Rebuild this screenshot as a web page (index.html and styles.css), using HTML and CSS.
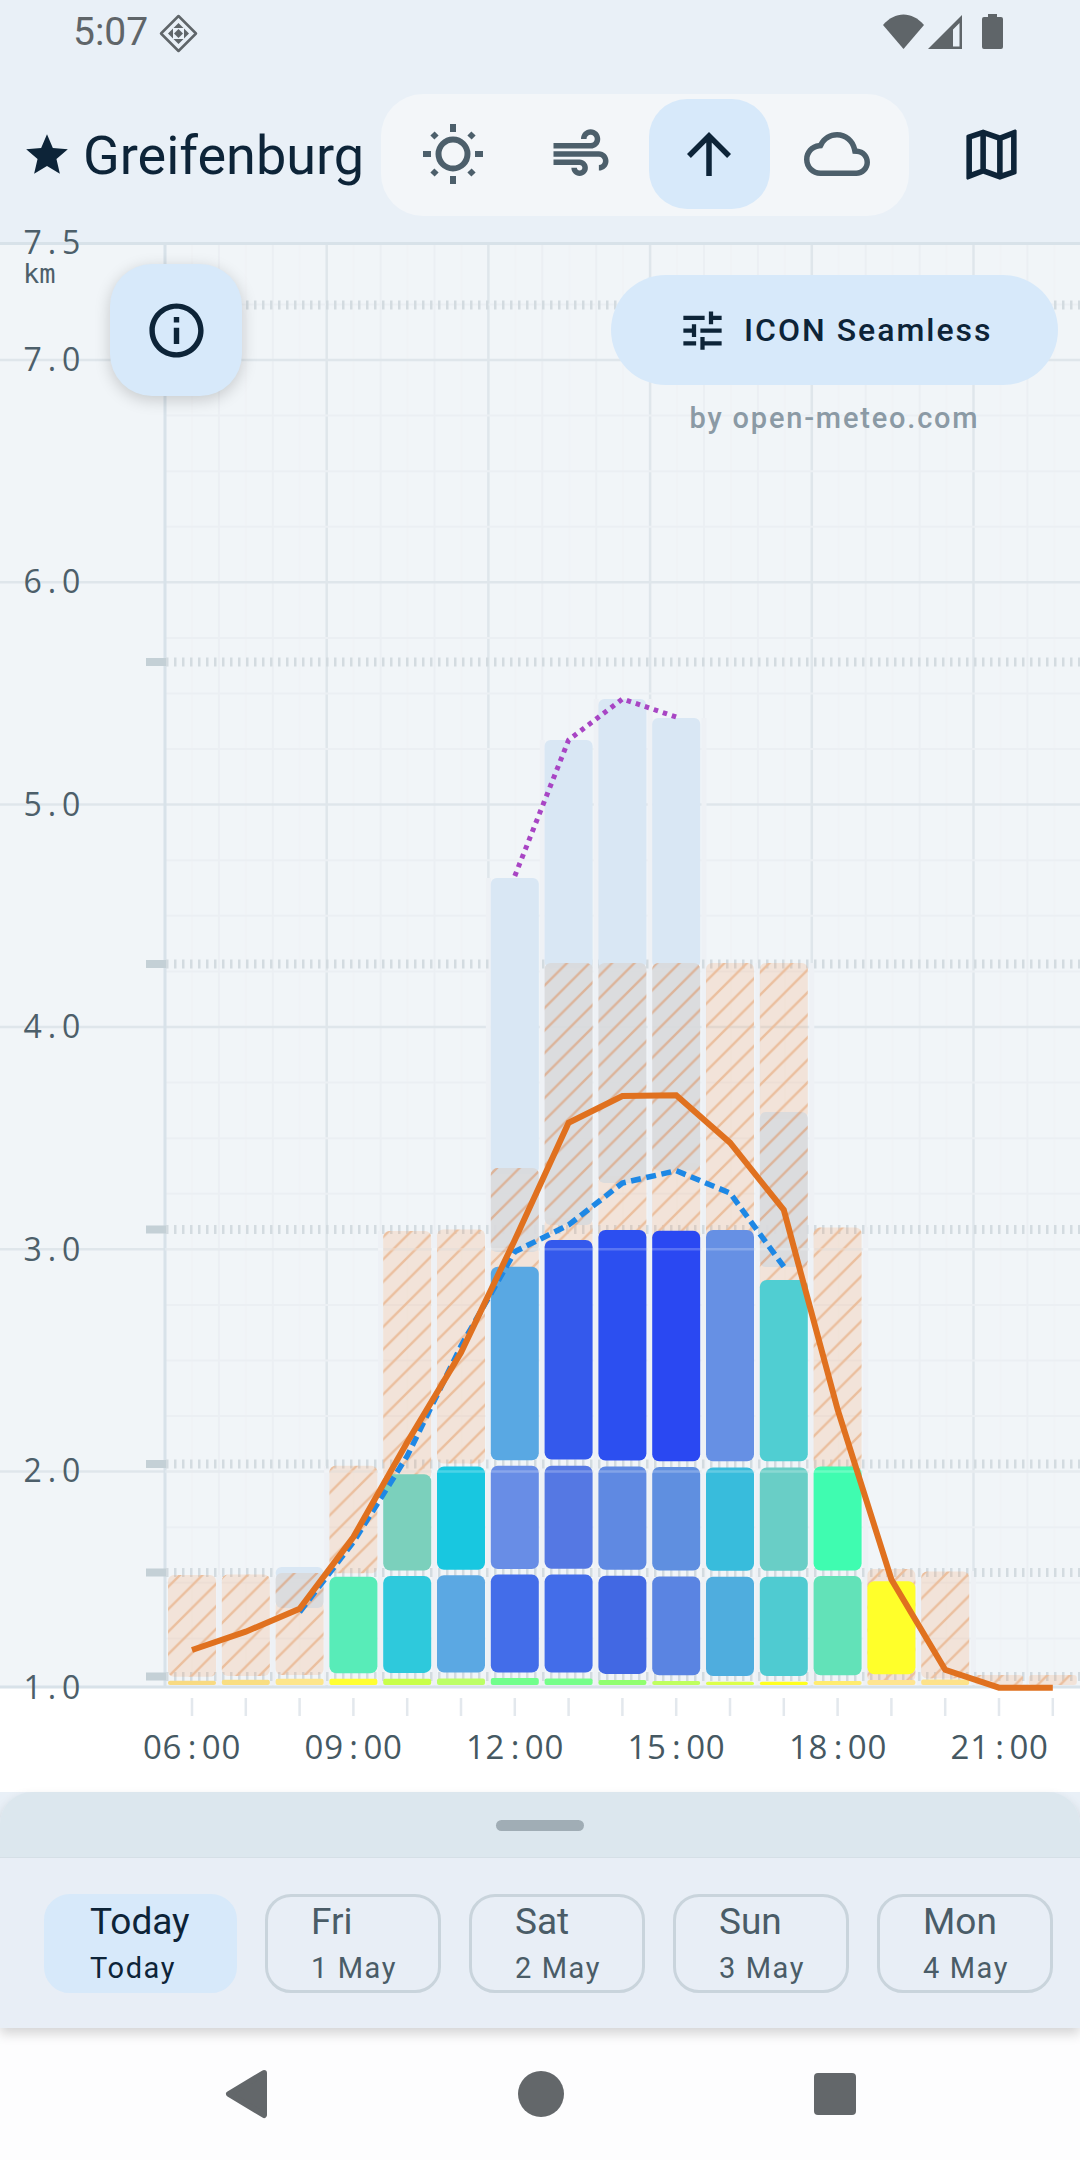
FILE: index.html
```html
<!DOCTYPE html>
<html>
	<head>
		<meta charset="utf-8">
		<title>Greifenburg</title>
		<link rel="stylesheet" href="styles.css">
	</head>
	<body>
		<div id="statusbar">
			<span class="clock">5:07</span>
			<svg class="notif" width="39" height="39" viewBox="0 0 39 39">
				<path class="notif-line" d="M19.5 2L37 19.5 19.5 37 2 19.5z"/>
				<path d="M19.5 9l5 5h-10zM19.5 30l-5-5h10zM9 19.5l5-5v10zM30 19.5l-5 5v-10z"/>
				<path d="M19.5 15l4.5 4.500-4.500 4.500-4.500-4.500z"/>
			</svg>
			<span class="grow"></span>
			<svg width="41" height="35" viewBox="0 0 41 35"><path d="M0 11C12-3 29-3 41 11L20.500 35z"/></svg>
			<svg class="signal" width="34" height="35" viewBox="0 0 34 35">
				<path d="M0 35L34 1v34zM25 32.500h6.500V9L25 15.500z" fill-rule="evenodd"/>
			</svg>
			<svg class="battery" width="21" height="35" viewBox="0 0 21 35"><path d="M6 0h9v3h4q2 0 2 2v28q0 2-2 2H2q-2 0-2-2V5q0-2 2-2h4z"/></svg>
		</div>

		<div id="appbar">
			<div class="place">
				<svg class="star" width="50" height="50" viewBox="0 0 24 24"><path d="M12 17.270L18.180 21l-1.640-7.030L22 9.240l-7.190-.610L12 2 9.190 8.630 2 9.240l5.460 4.730L5.820 21z"/></svg>
				<span>Greifenburg</span>
			</div>
			<div class="tabs">
				<div class="tab">
					<svg class="sun" width="62" height="62" viewBox="0 0 62 62">
						<circle cx="31" cy="31" r="14.500"/>
						<path d="M31 1v8M31 53v8M1 31h8M53 31h8M10.500 10.500l4 4M47.500 47.500l4 4M10.500 51.500l4-4M47.500 14.500l4-4"/>
					</svg>
				</div>
				<div class="tab">
					<svg width="66" height="66" viewBox="0 0 24 24"><path d="M14.500 17c0 1.650-1.350 3-3 3s-3-1.350-3-3h2c0 .55.45 1 1 1s1-.45 1-1-.45-1-1-1H2v-2h9.500c1.650 0 3 1.350 3 3zM19 6.500C19 4.570 17.430 3 15.500 3S12 4.570 12 6.500h2c0-.83.67-1.500 1.500-1.500s1.500.67 1.500 1.500S16.330 8 15.500 8H2v2h13.500c1.930 0 3.500-1.570 3.500-3.500zm-.5 4.500H2v2h16.500c.83 0 1.500.67 1.500 1.500s-.67 1.500-1.500 1.500v2c1.930 0 3.500-1.570 3.500-3.500S20.430 11 18.500 11z"/></svg>
				</div>
				<div class="tab active">
					<svg width="66" height="66" viewBox="0 0 24 24"><path d="M4 12l1.410 1.410L11 7.830V20h2V7.830l5.580 5.590L20 12l-8-8-8 8z"/></svg>
				</div>
				<div class="tab">
					<svg width="66" height="66" viewBox="0 0 24 24"><path d="M12 6c2.620 0 4.880 1.860 5.390 4.430l.3 1.500 1.530.11c1.560.1 2.780 1.410 2.780 2.960 0 1.650-1.350 3-3 3H6c-2.210 0-4-1.790-4-4 0-2.050 1.530-3.760 3.560-3.970l1.070-.11.5-.95C8.080 7.140 9.940 6 12 6m0-2C9.110 4 6.600 5.640 5.350 8.040 2.340 8.360 0 10.910 0 14c0 3.310 2.690 6 6 6h13c2.760 0 5-2.240 5-5 0-2.640-2.050-4.780-4.650-4.960C18.670 6.590 15.640 4 12 4z"/></svg>
				</div>
			</div>
			<svg class="map" width="67" height="67" viewBox="0 0 24 24"><path d="M20.500 3l-.16.03L15 5.100 9 3 3.360 4.900c-.21.07-.36.25-.36.48V20.500c0 .28.22.5.5.5l.16-.03L9 18.900l6 2.100 5.640-1.900c.21-.07.36-.25.36-.48V3.500c0-.28-.22-.5-.5-.5zM10 5.470l4 1.400v11.660l-4-1.400V5.470zm-5 .99l3-1.010v11.700l-3 1.160V6.460zm14 11.080l-3 1.010V6.860l3-1.160v11.840z"/></svg>
		</div>

		<div id="chart">
			<svg class="plot" width="1080" height="1549" viewBox="0 243 1080 1549">
				<defs>
					<pattern id="hatch" patternUnits="userSpaceOnUse" width="22.5" height="22.5">
						<rect class="hatch-bg" width="22.5" height="22.5"/>
						<path class="hatch-line" d="M-2 24.500L24.500-2M-2 2L2-2M20.500 24.500l4-4"/>
					</pattern>
					<pattern id="hatchgrey" patternUnits="userSpaceOnUse" width="22.5" height="22.5">
						<rect class="hatch-bg grey" width="22.5" height="22.5"/>
						<path class="hatch-line grey" d="M-2 24.500L24.500-2M-2 2L2-2M20.500 24.500l4-4"/>
					</pattern>
				</defs>

				<rect class="plot-bg" x="0" y="243" width="1080" height="1445"/>

				<!-- grid: half hour, hour, three hours -->
				<path class="grid-faint" d="M191.950 243V1688M245.850 243V1688M299.750 243V1688M353.650 243V1688M407.550 243V1688M461.450 243V1688M515.350 243V1688M569.250 243V1688M623.150 243V1688M677.050 243V1688M730.950 243V1688M784.850 243V1688M838.750 243V1688M892.650 243V1688M946.550 243V1688M1000.450 243V1688M1054.350 243V1688"/>
				<path class="grid-minor" d="M218.900 243V1688M272.800 243V1688M380.600 243V1688M434.500 243V1688M542.300 243V1688M596.200 243V1688M704 243V1688M757.900 243V1688M865.700 243V1688M919.600 243V1688M1027.400 243V1688"/>
				<path class="grid-major" d="M326.700 243V1688M488.400 243V1688M650.100 243V1688M811.800 243V1688M973.500 243V1688"/>
				<path class="grid-minor" d="M165 304.400H1080M165 415.600H1080M165 471.200H1080M165 526.700H1080M165 638H1080M165 693.500H1080M165 749H1080M165 860.200H1080M165 915.800H1080M165 971.400H1080M165 1082.600H1080M165 1138.200H1080M165 1193.700H1080M165 1304.900H1080M165 1360.500H1080M165 1416H1080M165 1527.200H1080M165 1582.800H1080M165 1638.400H1080"/>
				<path class="grid-major" d="M0 360H1080M0 582.300H1080M0 804.600H1080M0 1027H1080M0 1249.300H1080M0 1471.600H1080"/>
				<path class="grid-edge" d="M0 243.500H1080M165 243V1688M0 1687H1080"/>

				<!-- light strips between the columns -->
				<path class="gap" d="M218.900 1575V1685M272.800 1575V1685M326.700 1466V1685M380.600 1231V1685M434.500 1230V1685M488.400 878V1685M542.300 740V1685M596.200 699V1685M650.100 699V1685M704 718V1685M757.900 963V1685M811.800 963V1685M865.700 1227V1685M919.600 1569V1685M973.500 1571V1685"/>

				<!-- pressure levels -->
				<path class="level" d="M166 305H1080M166 662H1080M166 964H1080M166 1229.500H1080M166 1464H1080M166 1572.500H1080M166 1676.500H1080"/>
				<path class="level-tab" d="M146 305H166M146 662H166M146 964H166M146 1229.500H166M146 1464H166M146 1572.500H166M146 1676.500H166"/>

				<!-- high cloud -->
				<g class="cloud">
					<rect x="275.600" y="1567" width="48" height="12" rx="6"/>
					<rect x="490.800" y="878" width="48" height="296" rx="6"/>
					<rect x="544.600" y="740" width="48" height="228" rx="6"/>
					<rect x="598.400" y="699" width="48" height="269" rx="6"/>
					<rect x="652.200" y="718" width="48" height="250" rx="6"/>
				</g>

				<!-- sunshine, hatched -->
				<g class="hatched">
					<rect x="168" y="1575" width="48" height="101.700" rx="6"/>
					<rect x="221.800" y="1574.600" width="48" height="101.400" rx="6"/>
					<rect x="275.600" y="1600" width="48" height="75" rx="6"/>
					<rect x="329.400" y="1465.700" width="48" height="107.600" rx="6"/>
					<rect x="383.200" y="1231" width="48" height="249" rx="6"/>
					<rect x="437" y="1229.600" width="48" height="234" rx="6"/>
					<rect x="490.800" y="1246" width="48" height="34" rx="6"/>
					<rect x="544.600" y="1218" width="48" height="35" rx="6"/>
					<rect x="598.400" y="1176" width="48" height="67" rx="6"/>
					<rect x="652.200" y="1163" width="48" height="80" rx="6"/>
					<rect x="706" y="963" width="48" height="280" rx="6"/>
					<rect x="759.800" y="963" width="48" height="156" rx="6"/>
					<rect x="759.800" y="1260" width="48" height="33" rx="6"/>
					<rect x="813.600" y="1227.500" width="48" height="245" rx="6"/>
					<rect x="867.400" y="1569" width="48" height="113" rx="6"/>
					<rect x="921.200" y="1571.500" width="48" height="106.900" rx="6"/>
					<rect x="975" y="1675" width="48" height="10" rx="3"/>
					<rect x="1028.800" y="1675" width="48" height="10" rx="3"/>
				</g>
				<g class="hatched-grey">
					<rect x="275.600" y="1573" width="48" height="35" rx="6"/>
					<rect x="490.800" y="1168" width="48" height="84" rx="6"/>
					<rect x="544.600" y="963" width="48" height="262" rx="6"/>
					<rect x="598.400" y="963" width="48" height="220" rx="6"/>
					<rect x="652.200" y="963" width="48" height="207.500" rx="6"/>
					<rect x="759.800" y="1112" width="48" height="155" rx="6"/>
				</g>

				<!-- lowest row -->
				<g class="thin">
					<rect x="168" y="1680.800" width="48" height="4.200" fill="#f8da82"/>
					<rect x="221.800" y="1679.800" width="48" height="5.200" fill="#f9de82"/>
					<rect x="275.600" y="1678.700" width="48" height="6.300" fill="#fde68c"/>
					<rect x="329.400" y="1678.700" width="48" height="6.300" fill="#ffff33"/>
					<rect x="383.200" y="1678.700" width="48" height="6.300" fill="#c8ff4a"/>
					<rect x="437" y="1678.400" width="48" height="6.600" fill="#bcff66"/>
					<rect x="490.800" y="1678" width="48" height="7" fill="#70ff8c"/>
					<rect x="544.600" y="1678.400" width="48" height="6.600" fill="#75ff8a"/>
					<rect x="598.400" y="1680" width="48" height="5" fill="#90ff70"/>
					<rect x="652.200" y="1681" width="48" height="4" fill="#bfff60"/>
					<rect x="706" y="1681.800" width="48" height="3.200" fill="#dcff4a"/>
					<rect x="759.800" y="1681.800" width="48" height="3.200" fill="#ffff20"/>
					<rect x="813.600" y="1681" width="48" height="4" fill="#ffec70"/>
					<rect x="867.400" y="1680" width="48" height="5" fill="#ffe590"/>
					<rect x="921.200" y="1679.400" width="48" height="5.600" fill="#fde28a"/>
				</g>

				<!-- wind cells per level -->
				<g class="cells">
					<rect x="329.400" y="1576.700" width="48" height="96.500" fill="#58ecb8"/>
					<rect x="383.200" y="1576" width="48" height="96.900" fill="#2ec9dc"/>
					<rect x="437" y="1575.300" width="48" height="97.200" fill="#5ba8e3"/>
					<rect x="490.800" y="1574.600" width="48" height="97.900" fill="#436de9"/>
					<rect x="544.600" y="1574.600" width="48" height="97.900" fill="#436de9"/>
					<rect x="598.400" y="1575.700" width="48" height="98.200" fill="#4268e3"/>
					<rect x="652.200" y="1576.400" width="48" height="98.900" fill="#5a84e2"/>
					<rect x="706" y="1576.700" width="48" height="99.300" fill="#4fadde"/>
					<rect x="759.800" y="1576.700" width="48" height="99.300" fill="#4fcbd1"/>
					<rect x="813.600" y="1576" width="48" height="99.300" fill="#62e2b8"/>
					<rect x="867.400" y="1581.200" width="48" height="93.100" fill="#ffff2a"/>

					<rect x="383.200" y="1474.300" width="48" height="96.200" fill="#7bd0bc"/>
					<rect x="437" y="1466.400" width="48" height="103.400" fill="#18c7e0"/>
					<rect x="490.800" y="1465.700" width="48" height="103.400" fill="#688de6"/>
					<rect x="544.600" y="1465.700" width="48" height="103.100" fill="#5578e3"/>
					<rect x="598.400" y="1466.400" width="48" height="103.400" fill="#5f89e2"/>
					<rect x="652.200" y="1467" width="48" height="103.500" fill="#5f8fe0"/>
					<rect x="706" y="1467.400" width="48" height="103.400" fill="#38bcdc"/>
					<rect x="759.800" y="1467.400" width="48" height="103.400" fill="#69cec6"/>
					<rect x="813.600" y="1466.400" width="48" height="104.100" fill="#3ffcb0"/>

					<rect x="490.800" y="1266.700" width="48" height="193.500" fill="#59a8e3"/>
					<rect x="544.600" y="1240" width="48" height="219.500" fill="#3459ec"/>
					<rect x="598.400" y="1230" width="48" height="230.500" fill="#2c4ff0"/>
					<rect x="652.200" y="1230.700" width="48" height="230.500" fill="#2a48f2"/>
					<rect x="706" y="1230" width="48" height="231.200" fill="#6690e4"/>
					<rect x="759.800" y="1280" width="48" height="181.200" fill="#50ced2"/>
				</g>

				<path class="grid-over" d="M165 1249.300H1080M165 1471.600H1080"/>

				<polyline class="line-dotted" points="514.800,876 568.600,740 622.400,699 676.200,717"/>
				<polyline class="line-dashed" points="299.600,1612 353.400,1542 407.200,1456 461,1346 514.800,1251.700 568.600,1225 622.400,1183 676.200,1170.700 730,1193 783.800,1266.700"/>
				<polyline class="line-solid" points="192,1650 245.800,1631.700 299.600,1608.800 353.400,1537 407.200,1442.300 461,1352.600 514.800,1240 568.600,1122.700 622.400,1096 676.200,1095.300 730,1142.700 783.800,1210 837.600,1409.500 891.400,1579.500 945.200,1669.800 999,1687.700 1052.800,1687.700"/>

				<!-- height axis -->
				<g class="axis-y">
					<text x="23.500 47.700 61.900" y="254">7.5</text>
					<text class="unit" x="23" y="283">km</text>
					<text x="23.500 47.700 61.900" y="371">7.0</text>
					<text x="23.500 47.700 61.900" y="593">6.0</text>
					<text x="23.500 47.700 61.900" y="816">5.0</text>
					<text x="23.500 47.700 61.900" y="1038">4.0</text>
					<text x="23.500 47.700 61.900" y="1261">3.0</text>
					<text x="23.500 47.700 61.900" y="1482">2.0</text>
					<text x="23.500 47.700 61.900" y="1699">1.0</text>
				</g>

				<!-- time axis -->
				<path class="tick" d="M192 1698v18M245.800 1698v18M299.600 1698v18M353.400 1698v18M407.200 1698v18M461 1698v18M514.800 1698v18M568.600 1698v18M622.400 1698v18M676.200 1698v18M730 1698v18M783.800 1698v18M837.600 1698v18M891.400 1698v18M945.200 1698v18M999 1698v18M1052.800 1698v18"/>
				<g class="axis-x">
					<text x="143 162.600 187.700 201.800 221.400" y="1759">06:00</text>
					<text x="304.600 324.200 349.300 363.400 383" y="1759">09:00</text>
					<text x="466 485.600 510.700 524.800 544.400" y="1759">12:00</text>
					<text x="627.400 647 672.100 686.200 705.800" y="1759">15:00</text>
					<text x="789 808.600 833.700 847.800 867.400" y="1759">18:00</text>
					<text x="950.600 970.200 995.300 1009.400 1029" y="1759">21:00</text>
				</g>
			</svg>

			<div class="info">
				<svg width="65" height="65" viewBox="0 0 24 24"><path d="M11 7h2v2h-2zm0 4h2v6h-2zm1-9C6.480 2 2 6.480 2 12s4.480 10 10 10 10-4.480 10-10S17.520 2 12 2zm0 18c-4.410 0-8-3.590-8-8s3.590-8 8-8 8 3.590 8 8-3.590 8-8 8z"/></svg>
			</div>
			<div class="model-box">
				<div class="model">
					<svg width="51" height="51" viewBox="0 0 24 24"><path d="M3 17v2h6v-2H3zM3 5v2h10V5H3zm10 16v-2h8v-2h-8v-2h-2v6h2zM7 9v2H3v2h4v2h2V9H7zm14 4v-2H11v2h10zm-6-4h2V7h4V5h-4V3h-2v6z"/></svg>
					<span>ICON Seamless</span>
				</div>
				<div class="credit">by open-meteo.com</div>
			</div>
		</div>

		<div id="sheet">
			<div class="sheet-head"><div class="handle"></div></div>
			<div class="days">
				<div class="day selected"><b>Today</b><small>Today</small></div>
				<div class="day"><b>Fri</b><small>1 May</small></div>
				<div class="day"><b>Sat</b><small>2 May</small></div>
				<div class="day"><b>Sun</b><small>3 May</small></div>
				<div class="day"><b>Mon</b><small>4 May</small></div>
			</div>
		</div>

		<div id="navbar">
			<svg width="44" height="50" viewBox="0 0 44 50"><path d="M39 4L4 25l35 21z"/></svg>
			<svg width="46" height="46" viewBox="0 0 46 46"><circle cx="23" cy="23" r="23"/></svg>
			<svg width="42" height="42" viewBox="0 0 42 42"><rect width="42" height="42" rx="4"/></svg>
		</div>
	</body>
</html>
```

FILE: styles.css
```css
*{
	margin:0px;
	padding:0px;
	box-sizing:border-box;
}
body{
	width:1080px;
	height:2160px;
	overflow:hidden;
	background-color:#e9f0f7;
	font-family:Roboto,"Liberation Sans",sans-serif;
	display:flex;
	flex-direction:column;
}
svg{
	display:block;
	flex:none;
}

/* status bar */
#statusbar{
	height:66px;
	padding:14px 77px 0px 73px;
	display:flex;
	align-items:flex-start;
	color:#5f6569;
	fill:#5f6569;
}
.clock{
	font-size:39px;
	line-height:39px;
	width:86px;
	margin-top:-1px;
}
.grow{
	flex:1;
}
.notif-line{
	fill:none;
	stroke:#5f6569;
	stroke-width:2.5;
	stroke-linejoin:round;
}
.signal{
	margin-left:4px;
}
.battery{
	margin-left:20px;
}

/* app bar */
#appbar{
	height:177px;
	padding-top:28px;
	display:flex;
	align-items:flex-start;
}
.place{
	width:381px;
	height:122px;
	padding-left:22px;
	display:flex;
	align-items:center;
	color:#0d2438;
	fill:#0d2438;
	font-size:54px;
	white-space:nowrap;
}
.star{
	margin-right:11px;
}
.tabs{
	width:528px;
	height:122px;
	padding:5px 11.5px;
	border-radius:42px;
	background-color:#f3f6f9;
	display:flex;
	gap:7px;
}
.tab{
	width:121px;
	height:110px;
	border-radius:38px;
	display:flex;
	align-items:center;
	justify-content:center;
	fill:#4c5f6b;
}
.tab.active{
	background-color:#d7e9fa;
	fill:#0d2438;
}
.sun{
	fill:none;
	stroke:#4c5f6b;
	stroke-width:6;
}
.map{
	margin:27px 0px 0px 49px;
	fill:#0d2438;
}

/* chart */
#chart{
	position:relative;
	height:1549px;
	background-color:#fff;
}
.plot{
	overflow:visible;
}
.plot-bg{
	fill:#f1f5f8;
}
.grid-faint,.grid-minor,.grid-major,.grid-edge,.gap,.level,.level-tab,.tick,.grid-over,.hatch-line{
	fill:none;
}
.grid-faint{
	stroke:#f0f3f6;
	stroke-width:2;
}
.grid-minor{
	stroke:#ebeff3;
	stroke-width:2;
}
.grid-major{
	stroke:#dfe6eb;
	stroke-width:2.5;
}
.grid-edge{
	stroke:#d8e2e9;
	stroke-width:3;
}
.grid-over{
	stroke:rgba(255,255,255,.22);
	stroke-width:2.5;
}
.gap{
	stroke:#eef1f5;
	stroke-width:5;
}
.level{
	stroke:#d3dbe0;
	stroke-width:9;
	stroke-dasharray:2.5 5.5;
}
.level-tab{
	stroke:#c4d0d6;
	stroke-width:8;
}
.hatch-bg{
	fill:rgba(245,130,40,.15);
}
.hatch-bg.grey{
	fill:rgba(217,218,220,.92);
}
.hatch-line{
	stroke:#ebbf9e;
	stroke-width:2.4;
}
.hatch-line.grey{
	stroke:#dcb49a;
}
.cloud rect{
	fill:#d9e7f4;
}
.hatched rect{
	fill:url(#hatch);
}
.hatched-grey rect{
	fill:url(#hatchgrey);
}
.thin rect{
	rx:2px;
}
.cells rect{
	rx:7px;
}
.line-solid,.line-dashed,.line-dotted{
	fill:none;
}
.line-solid{
	stroke:#e0711f;
	stroke-width:6;
}
.line-dashed{
	stroke:#1e88e5;
	stroke-width:5.5;
	stroke-dasharray:10 5.5;
}
.line-dotted{
	stroke:#a845c4;
	stroke-width:5;
	stroke-dasharray:4.5 5;
}
.axis-y text{
	font-family:"Open Sans",sans-serif;
	font-size:32px;
	font-weight:400;
	fill:#4d5f6a;
}
.axis-y .unit{
	font-family:"DejaVu Sans Mono",monospace;
	font-size:27px;
}
.axis-x text{
	font-family:"Open Sans",sans-serif;
	font-size:33px;
	font-weight:500;
	fill:#455862;
}
.tick{
	stroke:#e3e8ed;
	stroke-width:2.5;
}
.info{
	position:absolute;
	left:110px;
	top:21px;
	width:132px;
	height:132px;
	border-radius:42px;
	background-color:#d7e9fa;
	box-shadow:0px 4px 16px rgba(0,0,0,.18);
	display:flex;
	align-items:center;
	justify-content:center;
	fill:#0d2438;
}
.model-box{
	position:absolute;
	left:611px;
	top:32px;
	width:447px;
}
.model{
	height:110px;
	border-radius:55px;
	background-color:#d7e9fa;
	padding-left:66px;
	display:flex;
	align-items:center;
	gap:16px;
	color:#0d2438;
	fill:#0d2438;
	font-size:32px;
	font-weight:500;
	letter-spacing:2px;
}
.credit{
	margin-top:16px;
	text-align:center;
	color:#8b9aa5;
	font-size:29px;
	font-weight:500;
	letter-spacing:1.8px;
}

/* days */
#sheet{
	position:relative;
	z-index:1;
	height:236px;
	background-color:#e8eef6;
	border-radius:32px 32px 0px 0px;
	box-shadow:0px 6px 12px rgba(0,0,0,.16);
}
.sheet-head{
	height:66px;
	padding-top:28px;
	border-radius:32px 32px 0px 0px;
	background-color:#dce7ee;
	border-bottom:1px solid #d5dfe6;
}
.handle{
	width:88px;
	height:11px;
	margin:auto;
	border-radius:6px;
	background-color:#a0adb5;
}
.days{
	padding:36px 0px 0px 44px;
	display:flex;
	gap:28px;
}
.day{
	flex:0 0 176px;
	height:99px;
	padding-left:43px;
	border:3px solid #c9d4dc;
	border-radius:26px;
	color:#4a5c67;
	display:flex;
	flex-direction:column;
}
.day.selected{
	flex-basis:193px;
	border-color:#d7e9fa;
	background-color:#d7e9fa;
	color:#0d2438;
}
.day b{
	font-size:37px;
	line-height:50px;
	font-weight:450;
}
.day small{
	font-size:29px;
	line-height:42px;
	font-weight:450;
	letter-spacing:1.6px;
}

/* android nav */
#navbar{
	flex:1;
	padding-left:1px;
	background-color:#fdfdfe;
	display:grid;
	grid-template-columns:294px 294px 294px;
	justify-content:center;
	justify-items:center;
	align-items:center;
	fill:#63676a;
}
#navbar path{
	stroke:#63676a;
	stroke-width:6;
	stroke-linejoin:round;
}
```
